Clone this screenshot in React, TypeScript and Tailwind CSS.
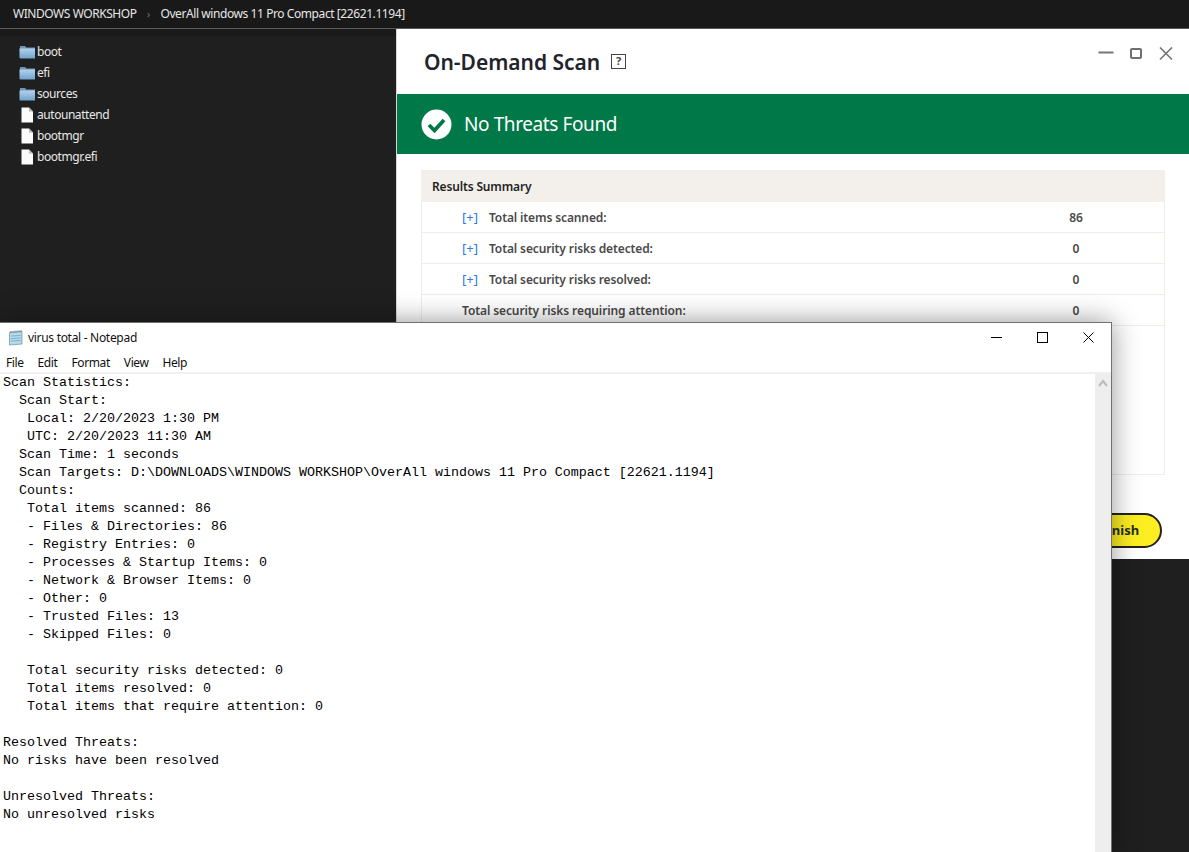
const ui = "font-['Noto_Sans','Open_Sans',sans-serif]";

function Folder() {
  return (
    <svg width="17" height="14" viewBox="0 0 17 14" className="shrink-0">
      <defs>
        <linearGradient id="fg" x1="0" y1="0" x2="0" y2="1">
          <stop offset="0" stopColor="#b4d2ea" />
          <stop offset="1" stopColor="#6fa3cf" />
        </linearGradient>
      </defs>
      <path d="M1 1h5l1.500 1.500H16V4H1z" fill="#6f94b5" />
      <path d="M0.500 3.500H16V13.500H1.500a1 1 0 0 1-1-1z" fill="url(#fg)" />
    </svg>
  );
}

function FileIcon() {
  return (
    <svg width="17" height="16" viewBox="0 0 17 16" className="shrink-0">
      <path d="M2.500 0.500H10L14 4.500V15.500H2.500z" fill="#fbfbfb" />
      <path d="M10 0.500V4.500H14z" fill="#b8b8b8" />
    </svg>
  );
}

function NotepadIcon() {
  return (
    <svg width="16" height="16" viewBox="0 0 16 16" className="shrink-0">
      <path d="M1.500 2.500L14 1.500V14L1.500 15z" fill="#b5dbe9" stroke="#6b8ea3" strokeWidth="0.7" />
      <path d="M3 6l9.500-.5M3 8.500l9.500-.5M3 11l9.500-.5" stroke="#6aa5c2" strokeWidth="0.8" />
      <path d="M3 3V1M5 2.800v-2M7 2.700v-2M9 2.500v-2M11 2.300v-2M13 2.100v-2" stroke="#666" strokeWidth="0.8" />
    </svg>
  );
}

const rows = [
  { label: "Total items scanned:", value: "86", plus: true },
  { label: "Total security risks detected:", value: "0", plus: true },
  { label: "Total security risks resolved:", value: "0", plus: true },
  { label: "Total security risks requiring attention:", value: "0", plus: false },
];

const files: [string, boolean][] = [
  ["boot", true],
  ["efi", true],
  ["sources", true],
  ["autounattend", false],
  ["bootmgr", false],
  ["bootmgr.efi", false],
];

const log = `Scan Statistics:
  Scan Start:
   Local: 2/20/2023 1:30 PM
   UTC: 2/20/2023 11:30 AM
  Scan Time: 1 seconds
  Scan Targets: D:\\DOWNLOADS\\WINDOWS WORKSHOP\\OverAll windows 11 Pro Compact [22621.1194]
  Counts:
   Total items scanned: 86
   - Files & Directories: 86
   - Registry Entries: 0
   - Processes & Startup Items: 0
   - Network & Browser Items: 0
   - Other: 0
   - Trusted Files: 13
   - Skipped Files: 0

   Total security risks detected: 0
   Total items resolved: 0
   Total items that require attention: 0

Resolved Threats:
No risks have been resolved

Unresolved Threats:
No unresolved risks`;

export default function App() {
  return (
    <div className={`relative w-[1189px] h-[852px] overflow-hidden bg-[#1f1f1f] ${ui}`}>
      {/* Explorer breadcrumb */}
      <div className="flex items-center h-[29px] bg-[#191919] border-b border-[#5a5a5a] pl-[13px] text-[12px] text-[#e6e6e6]">
        <span className="tracking-[-0.45px]">WINDOWS WORKSHOP</span>
        <span className="w-[24px] text-center text-[10px] text-[#777]">›</span>
        <span className="tracking-[-0.42px]">OverAll windows 11 Pro Compact [22621.1194]</span>
      </div>
      <div className="h-[7px] bg-[#1a1a1a]" />
      {/* File list */}
      <ul className="pl-[19px] pt-[5px] text-[12px] text-[#e8e8e8] tracking-[-0.45px]">
        {files.map(([name, dir]) => (
          <li key={name} className="flex items-center gap-[1px] h-[21px]">
            {dir ? <Folder /> : <FileIcon />}
            <span>{name}</span>
          </li>
        ))}
      </ul>

      {/* Scan window */}
      <section className="absolute left-[396px] top-[29px] w-[793px] h-[530px] bg-white border-l border-[#d8d8d8]">
        <header className="flex items-start h-[65px] pl-[27px] pr-[16px]">
          <h1 className="mt-[18px] text-[21px] font-semibold text-[#23232b] tracking-[-0.03px]">On-Demand Scan</h1>
          <span className="mt-[25px] ml-[11px] flex items-center justify-center w-[15px] h-[15px] border-[1.5px] border-[#444] text-[11px] font-bold text-[#444]">?</span>
          <div className="ml-auto mt-[18px] flex items-center gap-[16px]">
            <svg width="16" height="12" viewBox="0 0 16 12"><path d="M0.500 4.500H15.500" stroke="#777" strokeWidth="2" /></svg>
            <svg width="13" height="12" viewBox="0 0 13 12"><rect x="1" y="1" width="10" height="9" rx="1" fill="none" stroke="#707070" strokeWidth="2" /></svg>
            <svg width="14" height="14" viewBox="0 0 14 14"><path d="M1 0.500L13 12.500M13 0.500L1 12.500" stroke="#777" strokeWidth="1.700" /></svg>
          </div>
        </header>
        <div className="flex items-center h-[60px] bg-[#007847] pl-[24px] gap-[12px]">
          <svg width="31" height="31" viewBox="0 0 31 31">
            <circle cx="15.500" cy="15.500" r="15" fill="#fff" />
            <path d="M8 16l5.500 5.500L23 11" fill="none" stroke="#007847" strokeWidth="3.800" />
          </svg>
          <span className="text-[19px] text-white tracking-[-0.4px]">No Threats Found</span>
        </div>
        <div className="mt-[16px] ml-[24px] w-[744px] h-[305px] border-x border-b border-[#f0ede8] text-[12px] font-semibold text-[#4a4a4a]">
          <div className="flex items-center h-[32px] pt-px -mx-px bg-[#f3f0eb] pl-[11px] text-[#1f1f1f] tracking-[-0.15px]">Results Summary</div>
          {rows.map((r) => (
            <div key={r.label} className="flex items-center h-[31px] pt-px border-b border-[#f0ede8]">
              {r.plus ? (
                <>
                  <span className="w-[67px] pl-[40px] text-[13px] font-normal text-[#2a7ae2]">[+]</span>
                  <span className="tracking-[-0.12px]">{r.label}</span>
                </>
              ) : (
                <span className="pl-[40px] tracking-[-0.1px]">{r.label}</span>
              )}
              <span className="ml-auto w-[24px] mr-[76px] text-center">{r.value}</span>
            </div>
          ))}
        </div>
        <div className="flex justify-end mt-[38px] mr-[27px]">
          <button className="w-[84px] h-[35px] rounded-full bg-[#fdee21] border-2 border-[#222] text-[13px] font-bold text-[#1f2f1f]">Finish</button>
        </div>
      </section>

      {/* Notepad */}
      <section className="absolute left-0 top-[322px] w-[1112px] h-[530px] flex flex-col bg-white border-t border-r border-[#707070] shadow-[0_0_26px_rgba(0,0,0,0.42)]">
        <header className="flex items-center h-[30px] pl-[8px] shrink-0 text-[12px] text-[#111]">
          <NotepadIcon />
          <span className="ml-[4px] tracking-[-0.3px]">virus total - Notepad</span>
          <div className="ml-auto flex items-center -mt-[1px]">
            <span className="flex justify-center w-[46px]"><svg width="11" height="11" viewBox="0 0 11 11"><path d="M0 5.500H11" stroke="#000" /></svg></span>
            <span className="flex justify-center w-[46px]"><svg width="11" height="11" viewBox="0 0 11 11"><rect x="0.500" y="0.500" width="10" height="10" fill="none" stroke="#000" /></svg></span>
            <span className="flex justify-center w-[46px]"><svg width="11" height="11" viewBox="0 0 11 11"><path d="M0.500 0.500L10.500 10.500M10.500 0.500L0.500 10.500" stroke="#000" /></svg></span>
          </div>
        </header>
        <nav className="flex items-center h-[19px] shrink-0 pl-[6px] gap-[14px] text-[12px] text-[#111] tracking-[-0.4px]">
          <span>File</span>
          <span>Edit</span>
          <span>Format</span>
          <span>View</span>
          <span>Help</span>
        </nav>
        <div className="flex flex-1 min-h-0 border-t-2 border-[#f0f0f0]">
          <pre className="flex-1 pl-[3px] font-['DejaVu_Sans_Mono'] text-[13.330px] leading-[18px] text-black overflow-hidden">{log}</pre>
          <div className="w-[16px] flex justify-center pt-[5px] bg-[#eeeeee]">
            <svg width="10" height="8" viewBox="0 0 10 8"><path d="M1 7l4-5 4 5" fill="none" stroke="#bdbdbd" strokeWidth="2.200" /></svg>
          </div>
        </div>
      </section>
    </div>
  );
}
